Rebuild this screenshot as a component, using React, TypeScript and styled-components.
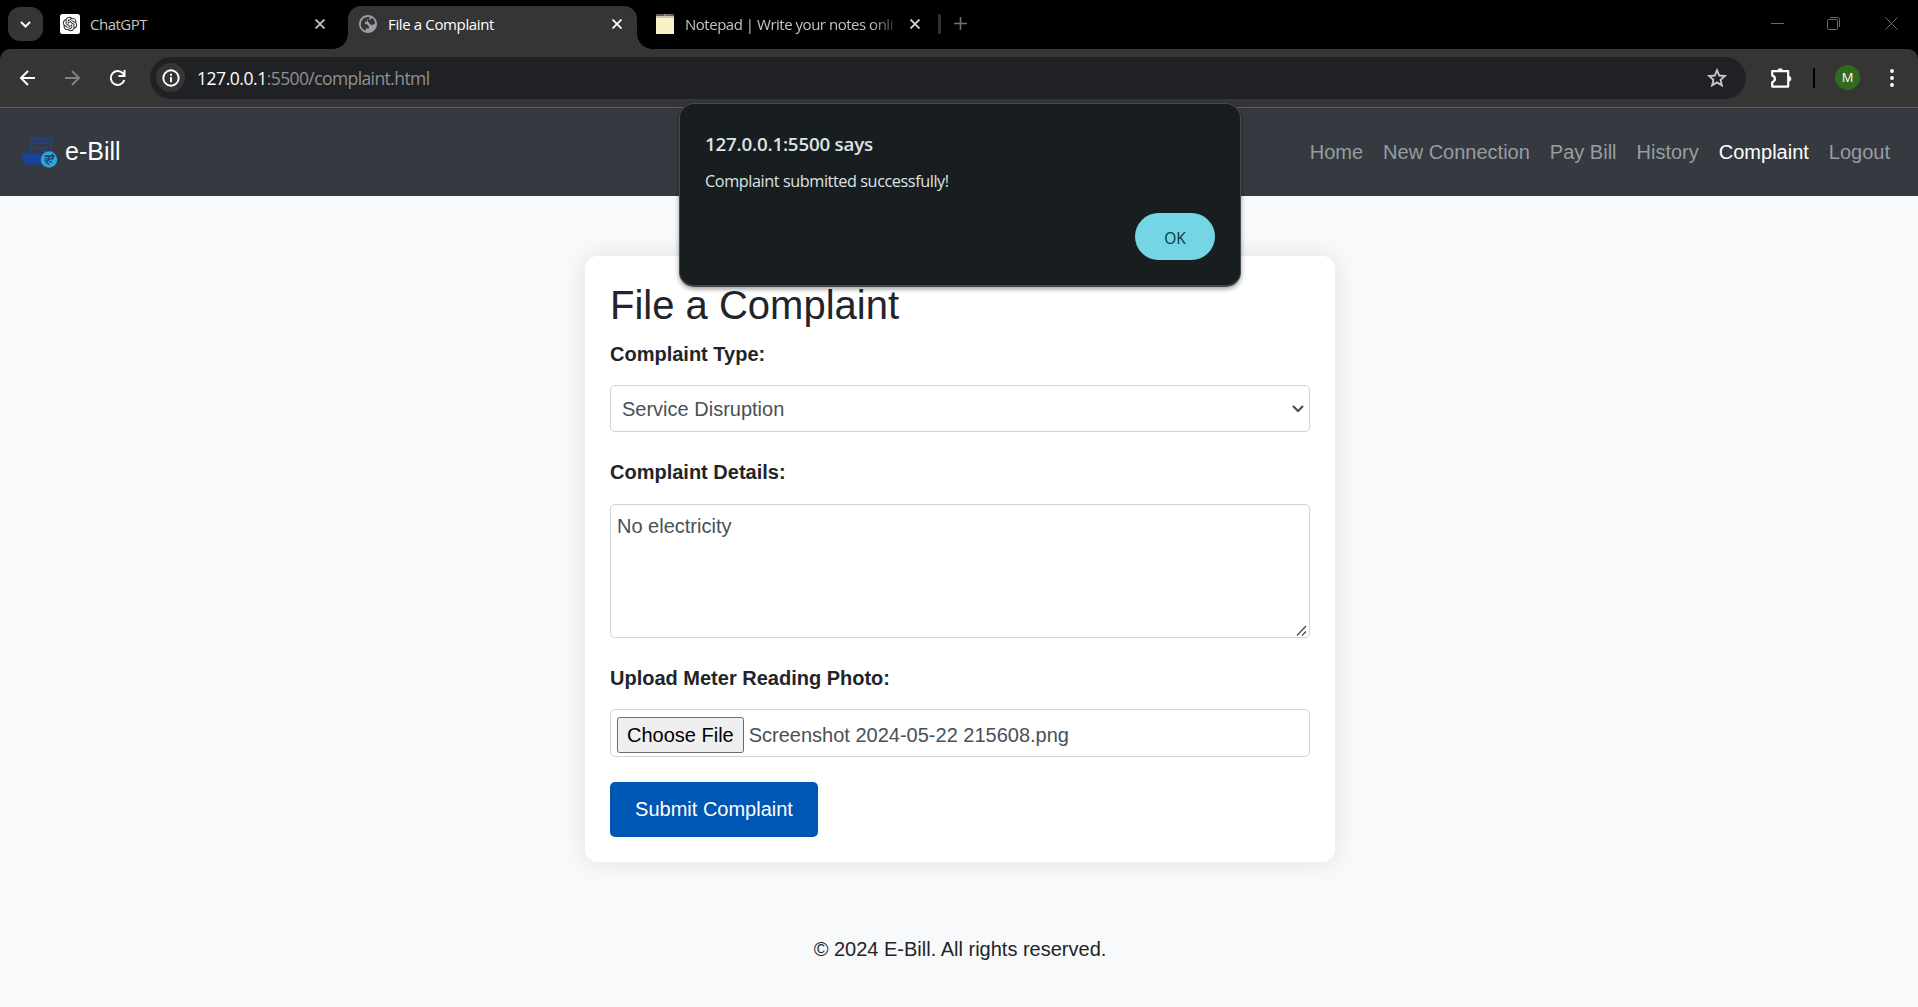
import React from "react";
import styled, { createGlobalStyle } from "styled-components";

const UI_FONT = `"Open Sans", "Noto Sans", sans-serif`;
const PAGE_FONT = `"Liberation Sans", Arial, sans-serif`;

const GlobalStyle = createGlobalStyle`
  *, *::before, *::after { box-sizing: border-box; }
  html, body, #root { margin: 0; height: 100%; }
  body { background: #f8f9fa; overflow: hidden; }
  svg { display: block; flex: none; }
`;

const Window = styled.div`
  display: flex;
  flex-direction: column;
  height: 1007px;
  font-family: ${PAGE_FONT};
  font-size: 20px;
  line-height: 30px;
  color: #212529;
`;

/* ---------- browser chrome ---------- */

const TabStrip = styled.header`
  display: flex;
  align-items: stretch;
  flex: none;
  height: 49px;
  padding-left: 8px;
  background: #000;
  font-family: ${UI_FONT};
`;

const TabSearch = styled.button`
  display: grid;
  place-items: center;
  width: 35px;
  height: 34px;
  margin: 7px 0 0;
  padding: 0;
  border: 0;
  border-radius: 12px;
  background: #353535;
`;

const Tab = styled.div<{ $width: number; $active?: boolean; $left: number; $right: number }>`
  position: relative;
  display: flex;
  align-items: center;
  flex: none;
  width: ${(p) => p.$width}px;
  height: ${(p) => (p.$active ? 43 : 49)}px;
  margin-top: ${(p) => (p.$active ? 6 : 0)}px;
  padding: 0 ${(p) => p.$right}px ${(p) => (p.$active ? 8 : 1)}px ${(p) => p.$left}px;
  border-radius: 13px 13px 0 0;
  background: ${(p) => (p.$active ? "#353535" : "transparent")};
  color: ${(p) => (p.$active ? "#fff" : "#c4c4c4")};

  &::before,
  &::after {
    content: "";
    display: ${(p) => (p.$active ? "block" : "none")};
    position: absolute;
    bottom: 0;
    width: 15px;
    height: 15px;
  }
  &::before {
    left: -15px;
    background: radial-gradient(circle at 0 0, transparent 14.5px, #353535 15px);
  }
  &::after {
    right: -15px;
    background: radial-gradient(circle at 100% 0, transparent 14.5px, #353535 15px);
  }
`;

const TabTitle = styled.span<{ $spacing: number; $fade?: boolean; $gap: number }>`
  flex: 1;
  min-width: 0;
  margin: 0 14px 0 ${(p) => p.$gap}px;
  white-space: nowrap;
  font-size: 15px;
  line-height: 22px;
  letter-spacing: ${(p) => p.$spacing}px;
  ${(p) => p.$fade && "mask-image: linear-gradient(90deg, #000 88%, transparent 103%);"}
`;

const StripDivider = styled.i`
  width: 3px;
  height: 20px;
  margin: 14px 13px 0 15px;
  border-radius: 2px;
  background: #303030;
`;

const NewTab = styled.div`
  padding-top: 17px;
`;

const WindowControls = styled.div`
  display: flex;
  gap: 43px;
  margin-left: auto;
  padding: 17px 20px 0 0;
  & > :last-child { margin-left: 2px; }
`;

const ToolbarBack = styled.div`
  flex: none;
  height: 59px;
  background: #000;
`;

const Toolbar = styled.div`
  display: flex;
  align-items: center;
  height: 59px;
  padding: 0 17px 1px 19px;
  border-bottom: 1px solid #5e5e5e;
  border-radius: 10px 10px 0 0;
  background: #353535;
  font-family: ${UI_FONT};
  & > svg + svg { margin-left: 27px; }
`;

const Omnibox = styled.div`
  display: flex;
  align-items: center;
  flex: 1;
  height: 42px;
  margin: 0 24px 0 23px;
  padding: 0 18px 0 6px;
  border-radius: 21px;
  background: #202124;
`;

const SiteInfo = styled.span`
  display: grid;
  place-items: center;
  width: 29px;
  height: 29px;
  border-radius: 50%;
  background: #353535;
`;

const Url = styled.span`
  flex: 1;
  margin-left: 12px;
  font-size: 17.5px;
  line-height: 24px;
  letter-spacing: -0.59px;
  color: #919191;
  b { font-weight: 400; color: #fff; letter-spacing: -0.46px; }
`;

const ToolbarDivider = styled.i`
  width: 2px;
  height: 20px;
  margin: 0 20px 0 21px;
  background: #000;
`;

const Avatar = styled.span`
  display: grid;
  place-items: center;
  width: 25px;
  height: 25px;
  margin-right: 23px;
  border-radius: 50%;
  background: #33691e;
  font-size: 13px;
  line-height: 25px;
  color: #fff;
`;

/* ---------- web page ---------- */

const Navbar = styled.nav`
  display: flex;
  align-items: center;
  justify-content: space-between;
  flex: none;
  height: 88px;
  padding: 0 18px 0 20px;
  background: #343a40;
`;

const Brand = styled.a`
  display: flex;
  align-items: center;
  gap: 7px;
  font-size: 25px;
  line-height: 38px;
  color: #fff;
`;

const BrandName = styled.span`
  padding-bottom: 2px;
`;

const NavLinks = styled.ul`
  display: flex;
  margin: 0;
  padding: 0;
  list-style: none;
`;

const NavLink = styled.li<{ $active?: boolean }>`
  padding: 10px;
  color: ${(p) => (p.$active ? "#fff" : "#999da0")};
`;

const Main = styled.main`
  display: flex;
  flex-direction: column;
  align-items: center;
  flex: 1;
  padding: 60px 0 0 2px;
  background: #f8f9fa;
`;

const Card = styled.form`
  width: 750px;
  height: 606px;
  padding: 25px;
  border-radius: 12.5px;
  background: #fff;
  box-shadow: 0 0 25px rgba(0, 0, 0, 0.1);
`;

const Title = styled.h2`
  margin: 0 0 10px;
  font-size: 40px;
  font-weight: 400;
  line-height: 48px;
`;

const Label = styled.label<{ $gap?: number }>`
  display: block;
  margin-bottom: ${(p) => p.$gap ?? 16}px;
  font-weight: 700;
`;

const Field = styled.div<{ $height: number; $pad: string }>`
  position: relative;
  display: flex;
  align-items: center;
  justify-content: ${(p) => (p.$height === 47 ? "space-between" : "flex-start")};
  height: ${(p) => p.$height}px;
  margin-bottom: 25px;
  padding: ${(p) => p.$pad};
  border: 1px solid #ced4da;
  border-radius: 5px;
  background: #fff;
  color: #495057;
`;

const TextArea = styled.textarea`
  width: 100%;
  height: 100%;
  padding: 6px;
  border: 0;
  outline: 0;
  background: transparent;
  resize: none;
  font: inherit;
  color: inherit;
`;

const Grip = styled.svg`
  position: absolute;
  right: 2px;
  bottom: 1px;
`;

const ChooseFile = styled.span`
  height: 36px;
  margin-right: 5px;
  padding: 0 9px;
  border: 1px solid #6b6b6b;
  border-radius: 2.5px;
  background: #efefef;
  line-height: 35px;
  color: #000;
`;

const Submit = styled.button`
  width: 208px;
  height: 55px;
  padding: 0 0 1px;
  border: 0;
  border-radius: 5px;
  background: #0056b3;
  font: inherit;
  color: #fff;
`;

const Footer = styled.footer`
  margin-top: 72px;
`;

/* ---------- alert dialog ---------- */

const Dialog = styled.div`
  position: absolute;
  left: 679px;
  top: 103px;
  display: flex;
  flex-direction: column;
  width: 562px;
  height: 184px;
  padding: 27px 25px 25px;
  border: 1px solid #454b4d;
  border-bottom-width: 2px;
  border-radius: 15px;
  background: #181d1f;
  box-shadow: 0 2px 5px rgba(0, 0, 0, 0.4);
  font-family: ${UI_FONT};
  color: #dee3e5;
`;

const DialogTitle = styled.strong`
  font-size: 18.75px;
  font-weight: 600;
  line-height: 26px;
  letter-spacing: -0.2px;
`;

const DialogText = styled.span`
  margin-top: 13px;
  font-size: 16.25px;
  line-height: 23px;
  letter-spacing: -0.43px;
`;

const OkButton = styled.button`
  align-self: flex-end;
  width: 80px;
  height: 47px;
  margin-top: auto;
  padding: 2px 0 0;
  border: 0;
  border-radius: 24px;
  background: #74d6e4;
  font: 500 15.5px ${UI_FONT};
  color: #08363d;
`;

/* ---------- drawings ---------- */

const CloseIcon = ({ color = "#d6d6d6" }: { color?: string }) => (
  <svg width="10" height="10" viewBox="0 0 10 10" stroke={color} strokeWidth="1.8">
    <path d="M.5.5l9 9M9.5.5l-9 9" />
  </svg>
);

const ChatIcon = () => (
  <svg width="20" height="20" viewBox="0 0 20 20">
    <rect width="20" height="20" rx="2.5" fill="#fff" />
    <path
      transform="translate(2.8 2.8) scale(.6)"
      fill="#222"
      d="M22.282 9.821a5.985 5.985 0 0 0-.516-4.911 6.046 6.046 0 0 0-6.51-2.9A6.065 6.065 0 0 0 4.981 4.182a5.985 5.985 0 0 0-3.998 2.9 6.046 6.046 0 0 0 .743 7.097 5.98 5.98 0 0 0 .511 4.911 6.051 6.051 0 0 0 6.515 2.9A5.985 5.985 0 0 0 13.26 24a6.056 6.056 0 0 0 5.772-4.206 5.990 5.990 0 0 0 3.998-2.900 6.056 6.056 0 0 0-.748-7.073zM13.260 22.430a4.476 4.476 0 0 1-2.876-1.041l.142-.080 4.778-2.758a.795.795 0 0 0 .393-.681v-6.737l2.020 1.169a.071.071 0 0 1 .038.052v5.583a4.504 4.504 0 0 1-4.495 4.493zM3.600 18.304a4.471 4.471 0 0 1-.535-3.014l.142.085 4.783 2.759a.771.771 0 0 0 .781 0l5.843-3.369v2.332a.080.080 0 0 1-.033.062L9.740 19.950a4.499 4.499 0 0 1-6.140-1.646zM2.341 7.896a4.485 4.485 0 0 1 2.366-1.973V11.600a.766.766 0 0 0 .388.677l5.815 3.354-2.020 1.169a.076.076 0 0 1-.071 0l-4.830-2.787A4.504 4.504 0 0 1 2.341 7.872zm16.597 3.855l-5.833-3.387L15.119 7.200a.076.076 0 0 1 .071 0l4.830 2.791a4.494 4.494 0 0 1-.676 8.105v-5.678a.790.790 0 0 0-.407-.667zm2.010-3.023l-.142-.085-4.774-2.782a.776.776 0 0 0-.785 0L9.409 9.230V6.897a.066.066 0 0 1 .028-.061l4.830-2.787a4.499 4.499 0 0 1 6.681 4.660zM8.307 12.863l-2.020-1.164a.080.080 0 0 1-.038-.057V6.075a4.499 4.499 0 0 1 7.376-3.453l-.142.080L8.704 5.460a.795.795 0 0 0-.393.681zm1.097-2.365l2.602-1.500 2.607 1.500v2.999l-2.597 1.500-2.607-1.500z"
    />
  </svg>
);

const GlobeIcon = () => (
  <svg width="18" height="18" viewBox="2 2 20 20" fill="#9aa0a6">
    <path d="M12 2C6.48 2 2 6.48 2 12s4.48 10 10 10 10-4.48 10-10S17.52 2 12 2zM4 12h4.4c3.4.02 4.9 1.73 4.6 5.13H9.5v2.47A8 8 0 0 1 4 12zm7-4.9v2.5H8.6V12H4.1A8 8 0 0 1 14.6 4.4c-1.5.6-1.6 1.5-1.6 2.7zm8.9 4.1c-1 1.4-2.2 1.7-3.4 1.7-2.1 0-3-.9-3-2.9h-1.6V7.1h2.1c1.4 0 1.5-1.3 2.4-2a8 8 0 0 1 3.5 6.1z" />
  </svg>
);

const NotepadIcon = () => (
  <svg width="18" height="20" viewBox="0 0 18 20">
    <path fill="#faf2c4" d="M0 3h18v17H0z" />
    <path fill="#c9c6c0" d="M0 1.5h18V4H0z" />
    <path fill="#5a5a5a" d="M0 0h18v1.8H0z" />
    <path fill="#d0873e" d="M8 0h2v1.8H8z" />
    <path fill="#4a86c8" d="M11 0h2v1.8h-2z" />
    <path fill="#c05a5a" d="M14 0h1v1.8h-1z" />
  </svg>
);

const BrandLogo = () => (
  <svg width="38" height="38" viewBox="0 0 38 38">
    <g fill="none" stroke="#1b4593" strokeWidth="1.5">
      <path d="M10 21l2.3-16L14 6.6 16 5l2 1.600L20 5l2 1.600L24 5l2 1.600L28 5l2 1.600L31.500 5 31 19" />
      <path d="M14.500 10h14M14 14.500h14M20.500 18h6" />
    </g>
    <path fill="#17439b" d="M1 20.500h20.500l2.500 11H6.500a3 3 0 0 1-2.700-1.800z" />
    <circle cx="29" cy="26.500" r="8.200" fill="#2ba5e0" />
    <path
      fill="none"
      stroke="#1d3f63"
      strokeWidth="1.300"
      d="M24.500 23h9M24.500 25.800h9M25.500 23c5 0 5 5.200 0 5.200l3.300 3.300M31.500 21l2.500 2-2.300 3M29 28.800h3"
    />
  </svg>
);

const NAV = ["Home", "New Connection", "Pay Bill", "History", "Complaint", "Logout"];

export default function App() {
  return (
    <Window>
      <GlobalStyle />
      <TabStrip>
        <TabSearch>
          <svg width="11" height="7" viewBox="0 0 11 7" fill="none" stroke="#fff" strokeWidth="2">
            <path d="M1 1l4.500 4.500L10 1" />
          </svg>
        </TabSearch>
        <Tab $width={305} $left={17} $right={23}>
          <ChatIcon />
          <TabTitle $spacing={-0.5} $gap={10}>ChatGPT</TabTitle>
          <CloseIcon color="#c4c4c4" />
        </Tab>
        <Tab $width={289} $left={11} $right={15} $active>
          <GlobeIcon />
          <TabTitle $spacing={-0.36} $gap={11}>File a Complaint</TabTitle>
          <CloseIcon color="#fff" />
        </Tab>
        <Tab $width={286} $left={19} $right={3}>
          <NotepadIcon />
          <TabTitle $spacing={-0.48} $gap={11} $fade>Notepad | Write your notes onli</TabTitle>
          <CloseIcon />
        </Tab>
        <StripDivider />
        <NewTab>
          <svg width="13" height="13" viewBox="0 0 13 13" stroke="#707070" strokeWidth="1.6">
            <path d="M6.500 0v13M0 6.500h13" />
          </svg>
        </NewTab>
        <WindowControls>
          <svg width="13" height="13" viewBox="0 0 13 13" stroke="#6b6b6b">
            <path d="M0 6.500h13" />
          </svg>
          <svg width="13" height="13" viewBox="0 0 13 13" fill="none" stroke="#6b6b6b">
            <rect x=".5" y="2.5" width="10" height="10" rx="1" />
            <path d="M3 .5h7.500a2 2 0 0 1 2 2V10" />
          </svg>
          <svg width="13" height="13" viewBox="0 0 13 13" stroke="#6b6b6b">
            <path d="M.3.3l12.400 12.400M12.700.3L.3 12.700" />
          </svg>
        </WindowControls>
      </TabStrip>

      <ToolbarBack>
        <Toolbar>
          <svg width="18" height="16" viewBox="0 0 18 16" fill="none" stroke="#fff" strokeWidth="2">
            <path d="M16 8H3M9 1L2 8l7 7" />
          </svg>
          <svg width="18" height="16" viewBox="0 0 18 16" fill="none" stroke="#808080" strokeWidth="2">
            <path d="M1 8h13M8 1l7 7-7 7" />
          </svg>
          <svg width="18" height="18" viewBox="0 0 18 18" fill="none" stroke="#fff" strokeWidth="2">
            <path d="M15.300 11A6.900 6.900 0 1 1 13.800 4.300L15.500 6M15.500 1v6h-6" />
          </svg>
          <Omnibox>
            <SiteInfo>
              <svg width="18" height="18" viewBox="0 0 18 18" fill="none" stroke="#fff" strokeWidth="1.900">
                <circle cx="9" cy="9" r="7.700" />
                <path d="M9 8v5.200M9 4.700v2" />
              </svg>
            </SiteInfo>
            <Url><b>127.0.0.1</b>:5500/complaint.html</Url>
            <svg width="22" height="22" viewBox="0 0 24 24" fill="none" stroke="#c7c7c7" strokeWidth="2">
              <path d="M12 3.500l2.400 5.800 6.200.5-4.700 4.100 1.400 6.100L12 16.800 6.700 20l1.400-6.100-4.700-4.100 6.200-.5z" />
            </svg>
          </Omnibox>
          <svg width="22" height="22" viewBox="0 0 22 22" fill="none" stroke="#fff" strokeWidth="2.200" strokeLinejoin="round">
            <path d="M2.200 4.200h16v15.400h-16v-4.300c3.600-1.200 3.600-5.800 0-6.700z" />
            <path fill="#fff" stroke="none" d="M7.500 4a2.700 2.700 0 0 1 5.400 0zM18.500 9a2.800 2.800 0 0 1 0 5.600z" />
          </svg>
          <ToolbarDivider />
          <Avatar>M</Avatar>
          <svg width="18" height="18" viewBox="0 0 18 18" fill="#fff">
            <circle cx="9" cy="2" r="1.900" />
            <circle cx="9" cy="9" r="1.900" />
            <circle cx="9" cy="16" r="1.900" />
          </svg>
        </Toolbar>
      </ToolbarBack>

      <Navbar>
        <Brand><BrandLogo /><BrandName>e-Bill</BrandName></Brand>
        <NavLinks>
          {NAV.map((name) => (
            <NavLink key={name} $active={name === "Complaint"}>{name}</NavLink>
          ))}
        </NavLinks>
      </Navbar>

      <Main>
        <Card>
          <Title>File a Complaint</Title>
          <Label>Complaint Type:</Label>
          <Field $height={47} $pad="0 5px 0 11px">
            <span>Service Disruption</span>
            <svg width="12" height="8" viewBox="0 0 12 8" fill="none" stroke="#495057" strokeWidth="2.200">
              <path d="M1 1l5 5 5-5" />
            </svg>
          </Field>
          <Label $gap={17}>Complaint Details:</Label>
          <Field $height={134} $pad="0">
            <TextArea readOnly value="No electricity" />
            <Grip width="11" height="11" viewBox="0 0 11 11" stroke="#555" strokeWidth="1.500">
              <path d="M1 10.500L10 1M6 10.500l4-4" />
            </Grip>
          </Field>
          <Label>Upload Meter Reading Photo:</Label>
          <Field $height={48} $pad="4px 6px 0">
            <ChooseFile>Choose File</ChooseFile>
            Screenshot 2024-05-22 215608.png
          </Field>
          <Submit type="button">Submit Complaint</Submit>
        </Card>
        <Footer>© 2024 E-Bill. All rights reserved.</Footer>
      </Main>

      <Dialog role="alertdialog">
        <DialogTitle>127.0.0.1:5500 says</DialogTitle>
        <DialogText>Complaint submitted successfully!</DialogText>
        <OkButton>OK</OkButton>
      </Dialog>
    </Window>
  );
}
